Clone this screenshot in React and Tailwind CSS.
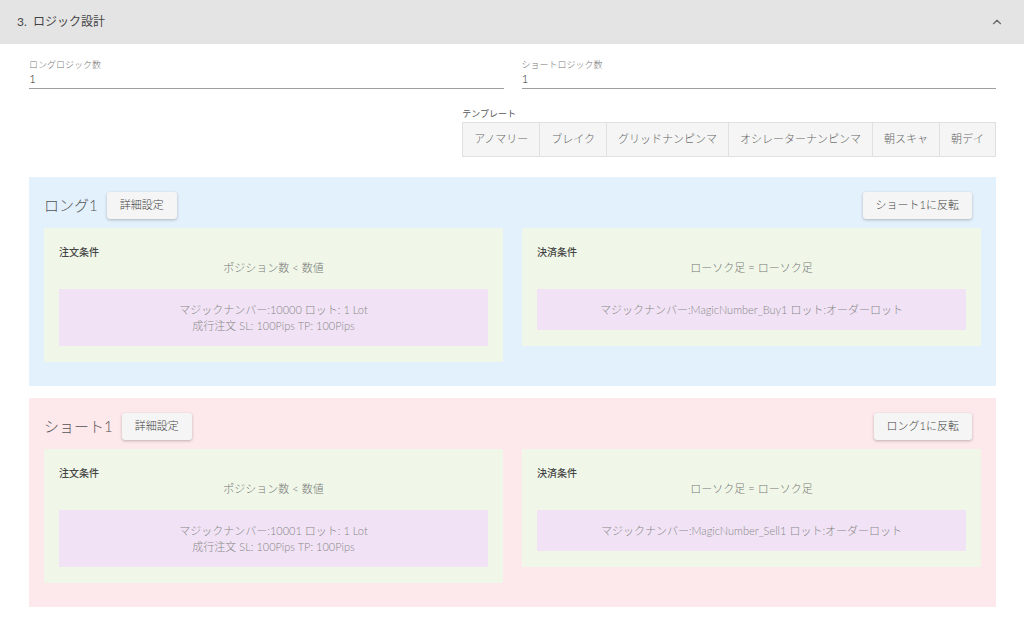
import { ChevronUp } from "lucide-react";

const font = { fontFamily: 'Lato, "Noto Sans CJK JP", sans-serif' };

const templates = ["アノマリー", "ブレイク", "グリッドナンピンマ", "オシレーターナンピンマ", "朝スキャ", "朝デイ"];

const logics = [
  {
    title: "ロング1",
    flip: "ショート1に反転",
    bg: "bg-[#e3f1fc]",
    magic: "10000",
    exitMagic: "MagicNumber_Buy1",
  },
  {
    title: "ショート1",
    flip: "ロング1に反転",
    bg: "bg-[#fde8eb]",
    magic: "10001",
    exitMagic: "MagicNumber_Sell1",
  },
];

const RaisedButton = ({ children }) => (
  <button
    type="button"
    className="h-[27px] px-[13px] rounded-[3px] bg-[#f5f5f5] text-[11px] text-[#444] font-light shadow-[0_1px_3px_rgba(0,0,0,0.25)]"
  >
    {children}
  </button>
);

const Field = ({ label }) => (
  <div className="flex flex-col border-b border-[#9e9e9e] pb-[1px]">
    <span className="text-[9px] leading-[12px] text-[#777] font-light">{label}</span>
    <span className="text-[12px] leading-[16px] text-[#333] font-light">1</span>
  </div>
);

const ConditionBox = ({ title, cond, lines }) => (
  <div className="bg-[#f0f7e8] px-[15px] pt-[17px] pb-[16px]">
    <div className="text-[10px] leading-[14px] text-[#444] font-medium">{title}</div>
    <div className="text-center text-[11px] leading-[16px] text-[#777] font-light mt-[1px]">{cond}</div>
    <div className="mt-[13px] bg-[#f1e3f5] pt-[13px] pb-[12px] text-center text-[11px] leading-[16px] text-[#888] font-light">
      {lines.map((l) => (
        <div key={l}>{l}</div>
      ))}
    </div>
  </div>
);

const LogicPanel = ({ logic }) => (
  <div className={`${logic.bg} px-[15px] pt-[15px] pb-[24px]`}>
    <div className="flex items-center justify-between pr-[9px]">
      <div className="flex items-center gap-[9px]">
        <span className="text-[15px] text-[#555] font-light">{logic.title}</span>
        <RaisedButton>詳細設定</RaisedButton>
      </div>
      <RaisedButton>{logic.flip}</RaisedButton>
    </div>
    <div className="mt-[9px] grid grid-cols-2 gap-[19px] items-start">
      <ConditionBox
        title="注文条件"
        cond="ポジション数 < 数値"
        lines={[`マジックナンバー:${logic.magic} ロット: 1 Lot`, "成行注文 SL: 100Pips TP: 100Pips"]}
      />
      <ConditionBox
        title="決済条件"
        cond="ローソク足 = ローソク足"
        lines={[`マジックナンバー:${logic.exitMagic} ロット:オーダーロット`]}
      />
    </div>
  </div>
);

export default function App() {
  return (
    <div className="w-[1024px] min-h-[635px] bg-white" style={font}>
      <div className="h-[44px] bg-[#e4e4e4] flex items-center justify-between pl-[17px] pr-[20px]">
        <span className="text-[12px] text-[#444]">3.&nbsp; ロジック設計</span>
        <ChevronUp size={14} strokeWidth={2} className="text-[#666]" />
      </div>
      <div className="pl-[29px] pr-[28px] pt-[15px]">
        <div className="grid grid-cols-2 gap-[18px]">
          <Field label="ロングロジック数" />
          <Field label="ショートロジック数" />
        </div>
        <div className="flex justify-end mt-[19px]">
          <div className="flex flex-col">
            <span className="text-[9px] leading-[12px] text-[#555]">テンプレート</span>
            <div className="flex mt-[2px] border border-[#e0e0e0] bg-[#f5f5f5]">
              {templates.map((t, i) => (
                <button
                  key={t}
                  type="button"
                  className={`h-[33px] px-[11px] text-[11px] text-[#666] font-light ${i > 0 ? "border-l border-[#e0e0e0]" : ""}`}
                >
                  {t}
                </button>
              ))}
            </div>
          </div>
        </div>
        <div className="mt-[20px] flex flex-col gap-[12px]">
          {logics.map((l) => (
            <LogicPanel key={l.title} logic={l} />
          ))}
        </div>
      </div>
    </div>
  );
}
